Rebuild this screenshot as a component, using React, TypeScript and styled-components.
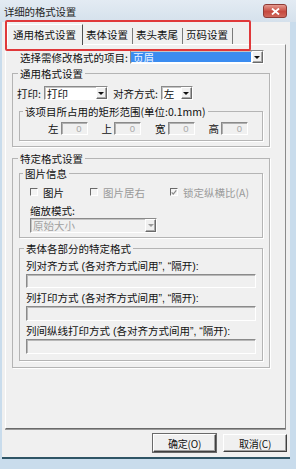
import React from 'react';
import styled, { createGlobalStyle, css } from 'styled-components';

const GlobalStyle = createGlobalStyle`
	html, body {
		margin: 0;
		padding: 0;
		background: #c9dcec;
	}
	* {
		box-sizing: border-box;
	}
`;

const font = css`
	font-family: 'Noto Sans CJK SC', 'Noto Sans', sans-serif;
	font-size: 10.5px;
	line-height: 13px;
	color: #111111;
`;

const sunken = css`
	border-top: 1px solid #8a8a8a;
	border-left: 1px solid #8a8a8a;
	border-right: 1px solid #ffffff;
	border-bottom: 1px solid #ffffff;
	box-shadow: inset 1px 1px 0 #c4c4c4;
`;

const raised = css`
	border-top: 1px solid #ffffff;
	border-left: 1px solid #ffffff;
	border-right: 1px solid #6a6a6a;
	border-bottom: 1px solid #6a6a6a;
	box-shadow: inset -1px -1px 0 #a8a8a8;
`;

const Window = styled.div`
	position: relative;
	width: 296px;
	height: 469px;
	display: flex;
	flex-direction: column;
	background: #c9dcec;
	overflow: hidden;
	${font};
`;

const TitleBar = styled.div`
	height: 22px;
	display: flex;
	align-items: center;
	justify-content: space-between;
	padding: 0 9px 0 4px;
	background: linear-gradient(#e3ebf3, #d5e1ec);
`;

const Title = styled.span`
	letter-spacing: -0.2px;
	color: #262626;
`;

const CloseButton = styled.div`
	width: 24px;
	height: 14px;
	border-radius: 3px;
	border: 1px solid #8e3b36;
	background: linear-gradient(#e59a90, #c6493f 55%, #d0685c);
	display: flex;
	align-items: center;
	justify-content: center;
`;

const Client = styled.div`
	height: 437px;
	margin: 0 6px 0 2px;
	padding: 0 3px;
	background: #f0f0f0;
	border-bottom: 2px solid #2f5566;
	display: flex;
	flex-direction: column;
`;

const TabStrip = styled.div`
	height: 22px;
	display: flex;
	align-items: flex-end;
	padding-left: 2px;
	position: relative;
	z-index: 1;
`;

const Tab = styled.div<{ $active?: boolean }>`
	display: flex;
	align-items: flex-start;
	white-space: nowrap;
	${(p) =>
		p.$active
			? css`
					height: 21px;
					margin-bottom: -1px;
					padding: 3px 6px 0 5px;
					background: #f0f0f0;
					border-top: 1px solid #ffffff;
					border-left: 1px solid #ffffff;
					border-right: 1px solid #505050;
			  `
			: css`
					height: 16px;
					padding: 0 4px 4px 3px;
					border-right: 1px solid #7a7a7a;
					align-items: center;
			  `}
`;

const Page = styled.div`
	width: 281px;
	height: 385px;
	border-top: 1px solid #ffffff;
	border-left: 1px solid #ffffff;
	border-right: 1px solid #8a8a8a;
	border-bottom: 1px solid #6a6a6a;
	box-shadow: 0 1px 0 #9a9a9a;
	display: flex;
	flex-direction: column;
`;

const FieldRow = styled.div<{ $top: number; $left: number }>`
	display: flex;
	align-items: center;
	height: 14px;
	margin-top: ${(p) => p.$top}px;
	padding-left: ${(p) => p.$left}px;
	white-space: nowrap;
`;

const Label = styled.span<{ $gap?: number; $indent?: number }>`
	margin-right: ${(p) => p.$gap ?? 2}px;
	margin-left: ${(p) => p.$indent ?? 0}px;
`;

const Combo = styled.div<{ $width: number; $disabled?: boolean }>`
	width: ${(p) => p.$width}px;
	height: ${(p) => (p.$disabled ? 15 : 14)}px;
	display: flex;
	${sunken};
	background: ${(p) => (p.$disabled ? '#f0f0f0' : '#ffffff')};
	color: ${(p) => (p.$disabled ? '#a0a0a0' : '#111111')};
`;

const ComboText = styled.div<{ $selected?: boolean }>`
	flex: 1;
	display: flex;
	align-items: center;
	padding-left: 2px;
	margin: 1px 1px 1px 0;
	background: ${(p) => (p.$selected ? '#3b8cf0' : 'transparent')};
	color: ${(p) => (p.$selected ? '#eef5ff' : 'inherit')};
`;

const ComboArrow = styled.div<{ $disabled?: boolean }>`
	width: 11px;
	background: #f0f0f0;
	${raised};
	display: flex;
	align-items: center;
	justify-content: center;
	&::after {
		content: '';
		border-left: 3px solid transparent;
		border-right: 3px solid transparent;
		border-top: 3px solid ${(p) => (p.$disabled ? '#9a9a9a' : '#111111')};
	}
`;

const Group = styled.fieldset<{ $top: number; $left: number; $width: number; $bottom: number }>`
	margin: ${(p) => p.$top}px 0 0 ${(p) => p.$left}px;
	width: ${(p) => p.$width}px;
	padding: 0 0 ${(p) => p.$bottom}px 0;
	border: 1px solid #b4b4b4;
	box-shadow: 1px 1px 0 #ffffff;
	min-width: 0;
	display: flex;
	flex-direction: column;
`;

const Legend = styled.legend<{ $left: number }>`
	margin-left: ${(p) => p.$left}px;
	padding: 0 2px;
	height: 13px;
	white-space: nowrap;
`;

const NumCell = styled.div`
	display: flex;
	align-items: center;
	margin-right: 14px;
`;

const NumInput = styled.div`
	width: 27px;
	height: 13px;
	${sunken};
	box-shadow: inset 1px 1px 0 #b0b0b0;
	background: #f0f0f0;
	color: #a8a8a8;
	font-family: 'Liberation Sans', sans-serif;
	font-size: 9.5px;
	text-align: right;
	padding-right: 5px;
	line-height: 11px;
`;

const CheckItem = styled.div<{ $width?: number; $muted?: boolean }>`
	display: flex;
	align-items: center;
	width: ${(p) => (p.$width ? `${p.$width}px` : 'auto')};
	color: ${(p) => (p.$muted ? '#9a9a9a' : '#111111')};
`;

const CheckBox = styled.span`
	width: 8px;
	height: 8px;
	margin-right: 5px;
	border-top: 1px solid #6a6a6a;
	border-left: 1px solid #6a6a6a;
	border-right: 1px solid #ffffff;
	border-bottom: 1px solid #ffffff;
	background: #f4f4f4;
	display: flex;
	align-items: center;
	justify-content: center;
`;

const TextLine = styled.div<{ $top: number }>`
	margin-top: ${(p) => p.$top}px;
	padding-left: 6px;
	white-space: nowrap;
	font-family: 'Liberation Sans', 'Noto Sans CJK SC', sans-serif;
`;

const TextBox = styled.div<{ $height: number }>`
	margin: 1px 0 0 6px;
	width: 230px;
	height: ${(p) => p.$height}px;
	${sunken};
	box-shadow: inset 1px 1px 0 #b8b8b8;
	background: #f0f0f0;
`;

const ButtonRow = styled.div`
	display: flex;
	justify-content: flex-end;
	gap: 7px;
	margin-top: 5px;
`;

const Button = styled.div<{ $default?: boolean; $width: number }>`
	width: ${(p) => p.$width}px;
	height: 18px;
	display: flex;
	align-items: center;
	justify-content: center;
	background: #f0f0f0;
	border-top: 1px solid #ffffff;
	border-left: 1px solid #ffffff;
	border-right: 1px solid #404040;
	border-bottom: 1px solid #404040;
	box-shadow: ${(p) => (p.$default ? '0 0 0 1px #6a6a6a, inset -1px -1px 0 #a0a0a0' : 'inset -1px -1px 0 #a0a0a0')};
	font-size: 10px;
	letter-spacing: -0.2px;
`;

const Annotation = styled.div`
	position: absolute;
	left: 5px;
	top: 20px;
	width: 246px;
	height: 31px;
	border: 2px solid #e0383a;
	border-radius: 2px;
	pointer-events: none;
	z-index: 2;
`;

const App: React.FC = () => {
	return (
		<Window>
			<GlobalStyle />
			<TitleBar>
				<Title>详细的格式设置</Title>
				<CloseButton>
					<svg width='9' height='7' viewBox='0 0 9 7'>
						<path d='M1 0.5 L8 6.5 M8 0.5 L1 6.5' stroke='#ffffff' strokeWidth='1.8' />
					</svg>
				</CloseButton>
			</TitleBar>
			<Client>
				<TabStrip>
					<Tab $active>通用格式设置</Tab>
					<Tab>表体设置</Tab>
					<Tab>表头表尾</Tab>
					<Tab>页码设置</Tab>
				</TabStrip>
				<Page>
					<FieldRow $top={5} $left={14}>
						<Label $gap={2}>选择需修改格式的项目:</Label>
						<Combo $width={134}>
							<ComboText $selected>页眉</ComboText>
							<ComboArrow />
						</Combo>
					</FieldRow>

					<Group $top={3} $left={6} $width={258} $bottom={5}>
						<Legend $left={5}>通用格式设置</Legend>
						<FieldRow $top={6} $left={4}>
							<Label $gap={3}>打印:</Label>
							<Combo $width={64}>
								<ComboText>打印</ComboText>
								<ComboArrow />
							</Combo>
							<Label $gap={3} $indent={5}>
								对齐方式:
							</Label>
							<Combo $width={32}>
								<ComboText>左</ComboText>
								<ComboArrow />
							</Combo>
						</FieldRow>
						<Group $top={5} $left={6} $width={244} $bottom={5}>
							<Legend $left={3}>该项目所占用的矩形范围(单位:0.1mm)</Legend>
							<FieldRow $top={3} $left={28}>
								{['左', '上', '宽', '高'].map((k) => (
									<NumCell key={k}>
										<Label $gap={2}>{k}</Label>
										<NumInput>0</NumInput>
									</NumCell>
								))}
							</FieldRow>
						</Group>
					</Group>

					<Group $top={5} $left={6} $width={258} $bottom={6}>
						<Legend $left={5}>特定格式设置</Legend>
						<Group $top={2} $left={6} $width={244} $bottom={5}>
							<Legend $left={3}>图片信息</Legend>
							<FieldRow $top={5} $left={10}>
								<CheckItem $width={60}>
									<CheckBox />
									图片
								</CheckItem>
								<CheckItem $width={80} $muted>
									<CheckBox />
									图片居右
								</CheckItem>
								<CheckItem $muted>
									<CheckBox>
										<svg width='7' height='7' viewBox='0 0 7 7'>
											<path d='M0.8 3.4 L2.6 5.4 L6.2 1' stroke='#8a8a8a' strokeWidth='1.4' fill='none' />
										</svg>
									</CheckBox>
									锁定纵横比(A)
								</CheckItem>
							</FieldRow>
							<FieldRow $top={4} $left={10}>
								<Label>缩放模式:</Label>
							</FieldRow>
							<FieldRow $top={1} $left={10}>
								<Combo $width={127} $disabled>
									<ComboText>原始大小</ComboText>
									<ComboArrow $disabled />
								</Combo>
							</FieldRow>
						</Group>
						<Group $top={4} $left={6} $width={244} $bottom={6}>
							<Legend $left={4}>表体各部分的特定格式</Legend>
							<TextLine $top={5}>列对齐方式 (各对齐方式间用”, “隔开):</TextLine>
							<TextBox $height={14} />
							<TextLine $top={4}>列打印方式 (各对齐方式间用”, “隔开):</TextLine>
							<TextBox $height={15} />
							<TextLine $top={4}>列间纵线打印方式 (各对齐方式间用”, “隔开):</TextLine>
							<TextBox $height={15} />
						</Group>
					</Group>
				</Page>
				<ButtonRow>
					<Button $default $width={63}>
						确定(O)
					</Button>
					<Button $width={64}>取消(C)</Button>
				</ButtonRow>
			</Client>
			<Annotation />
		</Window>
	);
};

export default App;
